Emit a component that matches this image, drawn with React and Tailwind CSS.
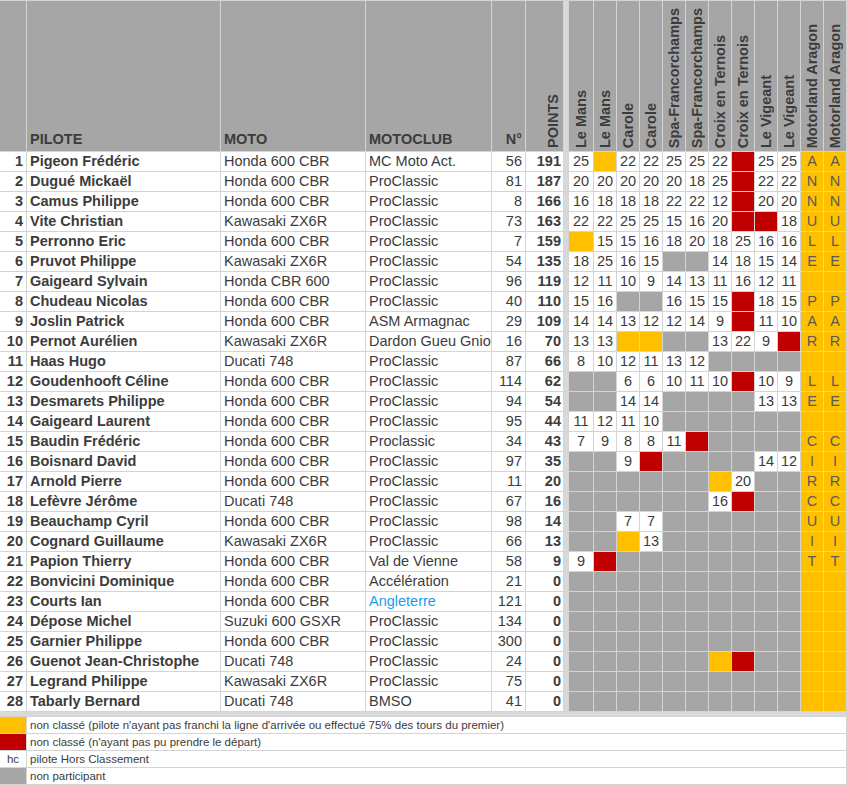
const races = ['Le Mans', 'Le Mans', 'Carole', 'Carole', 'Spa-Francorchamps', 'Spa-Francorchamps', 'Croix en Ternois', 'Croix en Ternois', 'Le Vigeant', 'Le Vigeant', 'Motorland Aragon', 'Motorland Aragon'];

const rows = [
  [1, 'Pigeon Frédéric', 'Honda 600 CBR', 'MC Moto Act.', 56, 191, '25 Y 22 22 25 25 22 R 25 25', 'A'],
  [2, 'Dugué Mickaël', 'Honda 600 CBR', 'ProClassic', 81, 187, '20 20 20 20 20 18 25 R 22 22', 'N'],
  [3, 'Camus Philippe', 'Honda 600 CBR', 'ProClassic', 8, 166, '16 18 18 18 22 22 12 R 20 20', 'N'],
  [4, 'Vite Christian', 'Kawasaki ZX6R', 'ProClassic', 73, 163, '22 22 25 25 15 16 20 R R 18', 'U'],
  [5, 'Perronno Eric', 'Honda 600 CBR', 'ProClassic', 7, 159, 'Y 15 15 16 18 20 18 25 16 16', 'L'],
  [6, 'Pruvot Philippe', 'Kawasaki ZX6R', 'ProClassic', 54, 135, '18 25 16 15 G G 14 18 15 14', 'E'],
  [7, 'Gaigeard Sylvain', 'Honda CBR 600', 'ProClassic', 96, 119, '12 11 10 9 14 13 11 16 12 11', ''],
  [8, 'Chudeau Nicolas', 'Honda 600 CBR', 'ProClassic', 40, 110, '15 16 G G 16 15 15 R 18 15', 'P'],
  [9, 'Joslin Patrick', 'Honda 600 CBR', 'ASM Armagnac', 29, 109, '14 14 13 12 12 14 9 R 11 10', 'A'],
  [10, 'Pernot Aurélien', 'Kawasaki ZX6R', 'Dardon Gueu Gnion', 16, 70, '13 13 Y Y G G 13 22 9 R', 'R'],
  [11, 'Haas Hugo', 'Ducati 748', 'ProClassic', 87, 66, '8 10 12 11 13 12 G G G G', ''],
  [12, 'Goudenhooft Céline', 'Honda 600 CBR', 'ProClassic', 114, 62, 'G G 6 6 10 11 10 R 10 9', 'L'],
  [13, 'Desmarets Philippe', 'Honda 600 CBR', 'ProClassic', 94, 54, 'G G 14 14 G G G G 13 13', 'E'],
  [14, 'Gaigeard Laurent', 'Honda 600 CBR', 'ProClassic', 95, 44, '11 12 11 10 G G G G G G', ''],
  [15, 'Baudin Frédéric', 'Honda 600 CBR', 'Proclassic', 34, 43, '7 9 8 8 11 R G G G G', 'C'],
  [16, 'Boisnard David', 'Honda 600 CBR', 'ProClassic', 97, 35, 'G G 9 R G G G G 14 12', 'I'],
  [17, 'Arnold Pierre', 'Honda 600 CBR', 'ProClassic', 11, 20, 'G G G G G G Y 20 G G', 'R'],
  [18, 'Lefèvre Jérôme', 'Ducati 748', 'ProClassic', 67, 16, 'G G G G G G 16 R G G', 'C'],
  [19, 'Beauchamp Cyril', 'Honda 600 CBR', 'ProClassic', 98, 14, 'G G 7 7 G G G G G G', 'U'],
  [20, 'Cognard Guillaume', 'Kawasaki ZX6R', 'ProClassic', 66, 13, 'G G Y 13 G G G G G G', 'I'],
  [21, 'Papion Thierry', 'Honda 600 CBR', 'Val de Vienne', 58, 9, '9 R G G G G G G G G', 'T'],
  [22, 'Bonvicini Dominique', 'Honda 600 CBR', 'Accélération', 21, 0, 'G G G G G G G G G G', ''],
  [23, 'Courts Ian', 'Honda 600 CBR', 'Angleterre', 121, 0, 'G G G G G G G G G G', ''],
  [24, 'Dépose Michel', 'Suzuki 600 GSXR', 'ProClassic', 134, 0, 'G G G G G G G G G G', ''],
  [25, 'Garnier Philippe', 'Honda 600 CBR', 'ProClassic', 300, 0, 'G G G G G G G G G G', ''],
  [26, 'Guenot Jean-Christophe', 'Ducati 748', 'ProClassic', 24, 0, 'G G G G G G Y R G G', ''],
  [27, 'Legrand Philippe', 'Kawasaki ZX6R', 'ProClassic', 75, 0, 'G G G G G G G G G G', ''],
  [28, 'Tabarly Bernard', 'Ducati 748', 'BMSO', 41, 0, 'G G G G G G G G G G', ''],
];

const legend = [
  { swatch: 'bg-[#ffc000]', text: "non classé (pilote n'ayant pas franchi la ligne d'arrivée ou effectué 75% des tours du premier)" },
  { swatch: 'bg-[#c00000]', text: "non classé (n'ayant pas pu prendre le départ)" },
  { swatch: 'bg-white', label: 'hc', text: 'pilote Hors Classement' },
  { swatch: 'bg-[#a6a6a6]', text: 'non participant' },
];

function RaceCell({ value }) {
  if (value === 'Y') return <div className="bg-[#ffc000]" />;
  if (value === 'R') return <div className="bg-[#c00000]" />;
  if (value === 'G') return <div className="bg-[#a6a6a6]" />;
  return <div className="bg-white text-center">{value}</div>;
}

function VerticalHeader({ label }) {
  return (
    <div className="flex items-end justify-center bg-[#a6a6a6] pb-[3px]">
      <span className="rotate-180 whitespace-nowrap font-bold [writing-mode:vertical-rl]">{label}</span>
    </div>
  );
}

export default function App() {
  return (
    <div
      className="w-[847px] bg-[#d4d4d4] pt-px pb-px text-[14.5px] leading-[19px] text-[#3c3c3c]"
      style={{ fontFamily: '"Liberation Sans", Arial, sans-serif' }}
    >
      <div className="grid grid-cols-[26px_193px_144px_125px_33px_37px_4px_24px_repeat(11,22px)] gap-px pr-px">
        <div className="h-[150px] bg-[#a6a6a6]" />
        <div className="flex items-end bg-[#a6a6a6] pb-[2px] pl-[3px] font-bold">PILOTE</div>
        <div className="flex items-end bg-[#a6a6a6] pb-[2px] pl-[3px] font-bold">MOTO</div>
        <div className="flex items-end bg-[#a6a6a6] pb-[2px] pl-[3px] font-bold">MOTOCLUB</div>
        <div className="flex items-end justify-end bg-[#a6a6a6] pb-[2px] pr-[3px] font-bold">N°</div>
        <div className="flex items-end justify-end bg-[#a6a6a6] pb-[3px]">
          <span className="rotate-180 font-bold [writing-mode:vertical-rl]">POINTS</span>
        </div>
        <div className="bg-[#d9d9d9]" />
        {races.map((race, i) => (
          <VerticalHeader key={i} label={race} />
        ))}

        {rows.map(([rank, pilote, moto, club, num, points, results, letter]) => (
          <div key={rank} className="contents">
            <div className="h-[19px] bg-white pr-[3px] text-right font-bold">{rank}</div>
            <div className="overflow-hidden whitespace-nowrap bg-white pl-[3px] font-bold">{pilote}</div>
            <div className="overflow-hidden whitespace-nowrap bg-white pl-[3px]">{moto}</div>
            <div
              className={`overflow-hidden whitespace-nowrap bg-white pl-[3px] ${club === 'Angleterre' ? 'text-[#1e9be8]' : ''}`}
            >
              {club}
            </div>
            <div className="bg-white pr-[3px] text-right">{num}</div>
            <div className="bg-white pr-[2px] text-right font-bold">{points}</div>
            <div className="bg-[#d9d9d9]" />
            {results.split(' ').map((value, i) => (
              <RaceCell key={i} value={value} />
            ))}
            <div className="bg-[#ffc000] text-center text-[#5a5a5a]">{letter}</div>
            <div className="bg-[#ffc000] text-center text-[#5a5a5a]">{letter}</div>
          </div>
        ))}

        <div className="col-[1/-1] h-[4px] bg-[#d9d9d9]" />

        {legend.map((item, i) => (
          <div key={i} className="contents">
            <div className={`h-[16px] text-center text-[11.5px] leading-[16px] ${item.swatch}`}>{item.label}</div>
            <div className="col-[2/-1] whitespace-nowrap bg-white pl-[3px] text-[11.5px] leading-[16px]">{item.text}</div>
          </div>
        ))}
      </div>
    </div>
  );
}
